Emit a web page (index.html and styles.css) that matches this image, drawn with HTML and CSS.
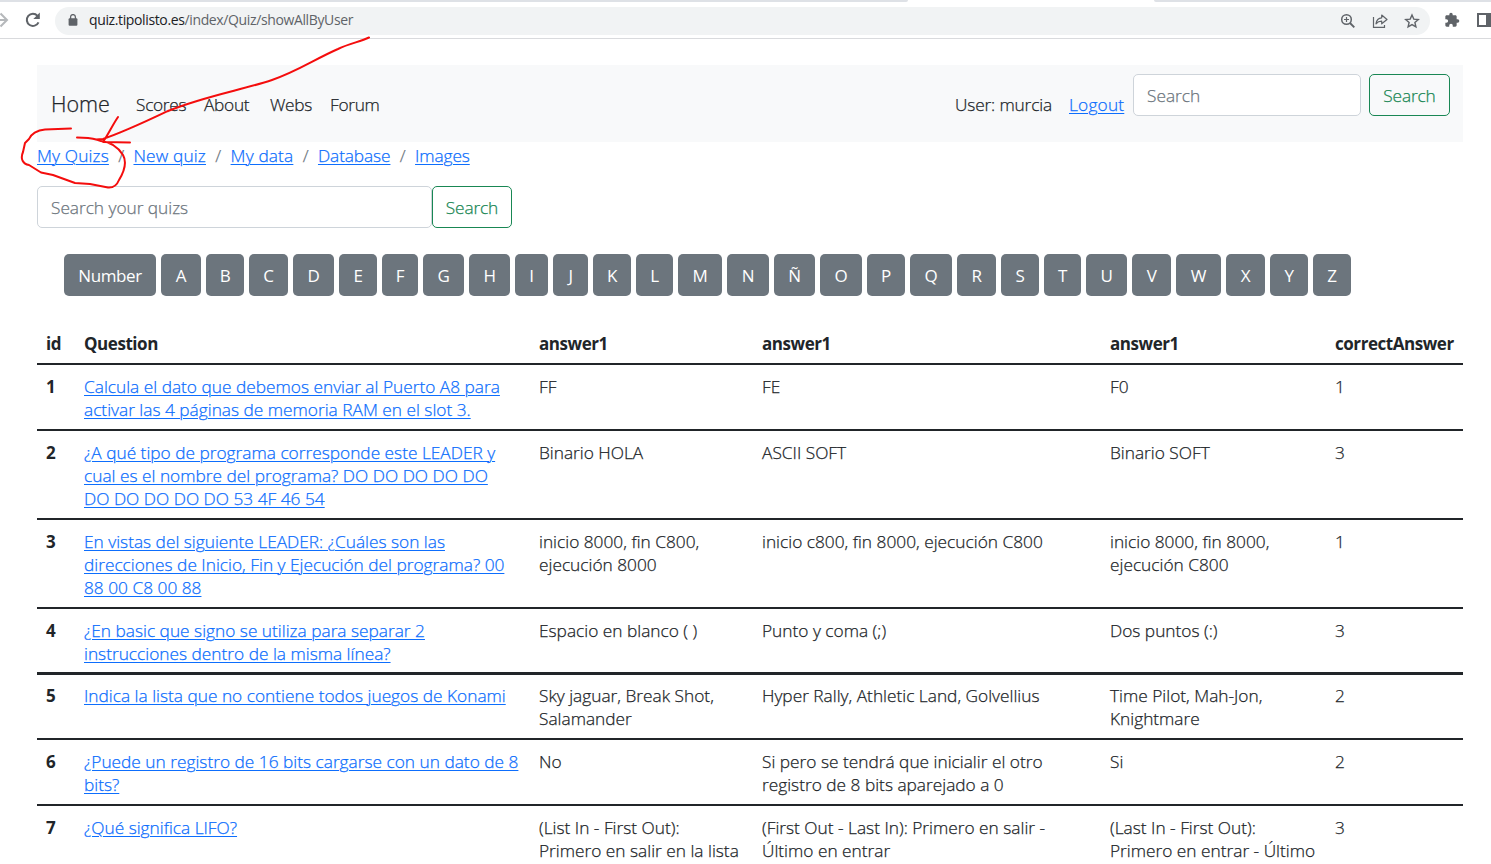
FILE: index.html
```
<!DOCTYPE html>
<html lang="es">
<head>
<meta charset="utf-8">
<title>My Quizs</title>
<link rel="stylesheet" href="styles.css">
</head>
<body>
<header class="browser">
  <div class="tabs"><span class="tab-left"></span><span class="tab-right"></span></div>
  <div class="toolbar">
    <svg class="ico forward" width="12" height="18" viewBox="0 0 12 18"><path d="M0 9H6.500M.5 2.500L7 9L.5 15.500" fill="none" stroke="#b5b8bb" stroke-width="2"/></svg>
    <svg class="ico reload" width="18" height="18" viewBox="0 0 18 18"><path d="M14.500 11.300A6.100 6.100 0 1 1 13.500 4.800" fill="none" stroke="#5f6368" stroke-width="2"/><path d="M15.800 1.500V8H9.300Z" fill="#5f6368"/></svg>
    <div class="address">
      <svg class="lock" width="10" height="13" viewBox="0 0 10 13"><rect x=".6" y="4.200" width="8.800" height="7.600" rx="1" fill="#5f6368"/><path d="M2.600 5V3a2.400 2.400 0 0 1 4.800 0V5" fill="none" stroke="#5f6368" stroke-width="1.300"/></svg>
      <span class="url"><b>quiz.tipolisto.es</b>/index/Quiz/showAllByUser</span>
      <span class="address-icons">
        <svg width="16" height="16" viewBox="0 0 16 16" fill="none" stroke="#5f6368"><circle cx="6.500" cy="6.500" r="4.800" stroke-width="1.500"/><path d="M10 10L14.300 14.300" stroke-width="1.900"/><path d="M4 6.500H9M6.500 4V9" stroke-width="1.200"/></svg>
        <svg width="16" height="16" viewBox="0 0 16 16" fill="none" stroke="#5f6368" stroke-width="1.200"><path d="M1.500 4V14.400H12.500V12"/><path d="M4 10.800C4.500 6.800 6.700 4.900 9.700 4.800V2L15 6.500L9.700 10.800V8.200C7 8.200 5.500 9 4 10.800Z" stroke-linejoin="round"/></svg>
        <svg width="16" height="16" viewBox="0 0 16 16" fill="none" stroke="#5f6368" stroke-width="1.400"><path d="M8 2L9.800 6.100L14.300 6.500L10.900 9.500L11.900 13.900L8 11.600L4.100 13.900L5.100 9.500L1.700 6.500L6.200 6.100Z"/></svg>
      </span>
    </div>
    <svg class="puzzle" width="16" height="16" viewBox="0 0 24 24" fill="#5f6368"><path d="M20.500 11H19V7c0-1.100-.9-2-2-2h-4V3.500a2.500 2.500 0 0 0-5 0V5H4c-1.100 0-2 .9-2 2v3.800h1.500a2.700 2.700 0 0 1 0 5.400H2V20c0 1.100.9 2 2 2h3.800v-1.500a2.700 2.700 0 0 1 5.400 0V22H17c1.100 0 2-.9 2-2v-4h1.500a2.500 2.500 0 0 0 0-5z"/></svg>
    <svg class="panel" width="14" height="14" viewBox="0 0 14 14"><path d="M1 1H14V13H1Z" fill="none" stroke="#5f6368" stroke-width="2"/><rect x="9" width="5" height="14" fill="#5f6368"/></svg>
  </div>
</header>
<main class="page">
  <nav class="navbar">
    <a class="brand">Home</a>
    <div class="links"><a class="scores">Scores</a><a class="about">About</a><a class="webs">Webs</a><a>Forum</a></div>
    <span class="user">User: murcia</span>
    <a class="logout link">Logout</a>
    <div class="field nav-field">Search</div>
    <div class="btn-search">Search</div>
  </nav>
  <div class="crumbs"><a class="link">My Quizs</a><i>/</i><a class="link">New quiz</a><i>/</i><a class="link">My data</a><i>/</i><a class="link tight">Database</a><i>/</i><a class="link tight">Images</a></div>
  <div class="quiz-search"><div class="field quiz-field">Search your quizs</div><div class="btn-search second">Search</div></div>
  <div class="letters"><a>Number</a><a>A</a><a>B</a><a>C</a><a>D</a><a>E</a><a>F</a><a>G</a><a>H</a><a>I</a><a>J</a><a>K</a><a>L</a><a>M</a><a>N</a><a>Ñ</a><a>O</a><a>P</a><a>Q</a><a>R</a><a>S</a><a>T</a><a>U</a><a>V</a><a>W</a><a>X</a><a>Y</a><a>Z</a></div>
  <table class="quizzes">
    <colgroup><col class="c-id"><col class="c-question"><col class="c-a"><col class="c-b"><col class="c-c"><col class="c-correct"></colgroup>
    <thead><tr><th>id</th><th>Question</th><th>answer1</th><th>answer1</th><th>answer1</th><th>correctAnswer</th></tr></thead>
    <tbody>
      <tr class="two"><th>1</th><td><a class="link">Calcula el dato que debemos enviar al Puerto A8 para<br>activar las 4 páginas de memoria RAM en el slot 3.</a></td><td>FF</td><td>FE</td><td>F0</td><td>1</td></tr>
      <tr class="three"><th>2</th><td><a class="link">¿A qué tipo de programa corresponde este LEADER y<br>cual es el nombre del programa? DO DO DO DO DO<br>DO DO DO DO DO 53 4F 46 54</a></td><td>Binario HOLA</td><td>ASCII SOFT</td><td>Binario SOFT</td><td>3</td></tr>
      <tr class="three"><th>3</th><td><a class="link">En vistas del siguiente LEADER: ¿Cuáles son las<br>direcciones de Inicio, Fin y Ejecución del programa? 00<br>88 00 C8 00 88</a></td><td>inicio 8000, fin C800,<br>ejecución 8000</td><td>inicio c800, fin 8000, ejecución C800</td><td>inicio 8000, fin 8000,<br>ejecución C800</td><td>1</td></tr>
      <tr class="two thick"><th>4</th><td><a class="link">¿En basic que signo se utiliza para separar 2<br>instrucciones dentro de la misma línea?</a></td><td>Espacio en blanco ( )</td><td>Punto y coma (;)</td><td>Dos puntos (:)</td><td>3</td></tr>
      <tr class="two short"><th>5</th><td><a class="link">Indica la lista que no contiene todos juegos de Konami</a></td><td>Sky jaguar, Break Shot,<br>Salamander</td><td>Hyper Rally, Athletic Land, Golvellius</td><td>Time Pilot, Mah-Jon,<br>Knightmare</td><td>2</td></tr>
      <tr class="two"><th>6</th><td><a class="link">¿Puede un registro de 16 bits cargarse con un dato de 8<br>bits?</a></td><td>No</td><td>Si pero se tendrá que inicialir el otro<br>registro de 8 bits aparejado a 0</td><td>Si</td><td>2</td></tr>
      <tr class="two"><th>7</th><td><a class="link">¿Qué significa LIFO?</a></td><td>(List In - First Out):<br>Primero en salir en la lista</td><td>(First Out - Last In): Primero en salir -<br>Último en entrar</td><td>(Last In - First Out):<br>Primero en entrar - Último</td><td>3</td></tr>
    </tbody>
  </table>
</main>
<svg class="ink" width="400" height="200" viewBox="0 0 400 200"><path d="M369 37.500C360 42 350 43 338 49C315 59 298 71 272 80C242 90 205 96 168 111C147 121 124 132 103 139L96 139.500M118 117C112 126 109 133 103 142L130 142.500M71 128.500L45 129.500C37 130 31 134 29 139L25 143L23 152C20 159 23 164 29 165L41 172.500L53 175L75 183L90 184L108 187.500C114 188 117 185 119 180C125 170 127 162 123 155C118 147 110 142 101 141C92 137 86 138 77 137.500"/></svg>
</body>
</html>
```
FILE: styles.css
```
* { box-sizing: border-box; }
body { margin: 0; width: 1491px; height: 864px; overflow: hidden; position: relative; background: #fff; color: #212529; font: 300 17.3px/23px "Open Sans", "Noto Sans", sans-serif; -webkit-text-stroke: .25px currentColor; white-space: nowrap; }
svg { display: block; flex: none; }
.browser { height: 39px; border-bottom: 1px solid #d9dadd; -webkit-text-stroke: 0; }
.tabs { height: 2px; display: flex; justify-content: space-between; }
.tab-left { width: 908px; background: #dee1e6; border-bottom-right-radius: 3px; }
.tab-right { width: 337px; background: #dee1e6; border-bottom-left-radius: 3px; }
.toolbar { height: 36px; display: flex; align-items: center; }
.reload { margin: 0 12px 0 12px; }
.address { width: 1375px; height: 28px; border-radius: 14px; background: #f1f3f4; display: flex; align-items: center; padding: 0 18px 0 13px; margin: 1px 0 0 1px; }
.url { margin: -2px 0 0 11px; color: #5f6368; font: 400 14px/20px "Open Sans", sans-serif; letter-spacing: -.37px; }
.url b { font-weight: 400; color: #202124; }
.address-icons { display: flex; gap: 16px; margin-left: auto; margin-right: -8px; }
.puzzle { margin-left: 14px; }
.panel { margin-left: 17px; }
.page { padding: 26px 28px 0 37px; }
.navbar { height: 77px; background: #f8f9fa; display: flex; align-items: flex-start; padding: 9px 13px 0 14px; }
.brand { width: 85px; font-size: 21.5px; line-height: 60px; letter-spacing: 0; }
.links, .user, .logout { line-height: 61px; }
.links { display: flex; letter-spacing: -.3px; }
.user { letter-spacing: -.15px; }
.scores { width: 68px; }
.about { width: 66px; }
.webs { width: 60px; }
.user { margin-left: auto; width: 114px; }
.logout { width: 64px; letter-spacing: .2px; }
.link { color: #0d6efd; text-decoration: underline; text-decoration-thickness: 1px; text-underline-offset: 2px; }
.field { height: 42px; border: 1px solid #ced4da; border-radius: 5px; background: #fff; color: #6c757d; line-height: 42px; padding-left: 13px; }
.nav-field { width: 228px; margin-right: 8px; }
.btn-search { width: 81px; height: 42px; border: 1px solid #198754; border-radius: 5px; color: #198754; text-align: center; line-height: 42px; letter-spacing: -.15px; }
.second { width: 80px; }
.crumbs { display: flex; height: 44px; padding-top: 2px; letter-spacing: .15px; }
.crumbs i { width: 24.6px; text-align: center; font-style: normal; color: #6c757d; }
.crumbs .tight { letter-spacing: -.1px; }
.quiz-search { display: flex; }
.quiz-field { width: 395px; letter-spacing: -.03px; }
.letters { display: grid; grid-template-columns: 97px 45px 43px 44px 46px 43px 41px 46px 46px 38px 40px 43px 42px 49px 47px 46px 47px 43px 47px 44px 43px 42px 46px 44px 50px 44px 43px 43px; margin: 26px 0 0 27px; font-size: 17px; letter-spacing: -.4px; -webkit-text-stroke: 0; }
.letters a { height: 42px; margin-right: 5px; border-radius: 5px; background: #6c757d; color: #fff; text-align: center; line-height: 43px; font-weight: 400; }
.quizzes { width: 1426px; margin-top: 27px; table-layout: fixed; border-collapse: separate; border-spacing: 0; }
.c-id { width: 38px; }
.c-question { width: 455px; }
.c-a { width: 223px; }
.c-b { width: 348px; }
.c-c { width: 225px; }
.c-correct { width: 137px; }
.quizzes th, .quizzes td { padding: 10px 0 0 9px; vertical-align: top; text-align: left; border-bottom: 2px solid #212529; }
.quizzes th { font-size: 17px; font-weight: 700; letter-spacing: -.45px; -webkit-text-stroke: 0; }
.quizzes thead th { padding-top: 9px; height: 42px; }
.two td { height: 66px; }
.three td { height: 89px; }
.quizzes .thick th, .quizzes .thick td { border-bottom-width: 3px; }
.short td { height: 65px; }
.quizzes .short th, .quizzes .short td { padding-top: 9px; }
.ink { position: absolute; left: 0; top: 0; fill: none; stroke: #f40d0d; stroke-width: 2; stroke-linecap: round; stroke-linejoin: round; }
```
